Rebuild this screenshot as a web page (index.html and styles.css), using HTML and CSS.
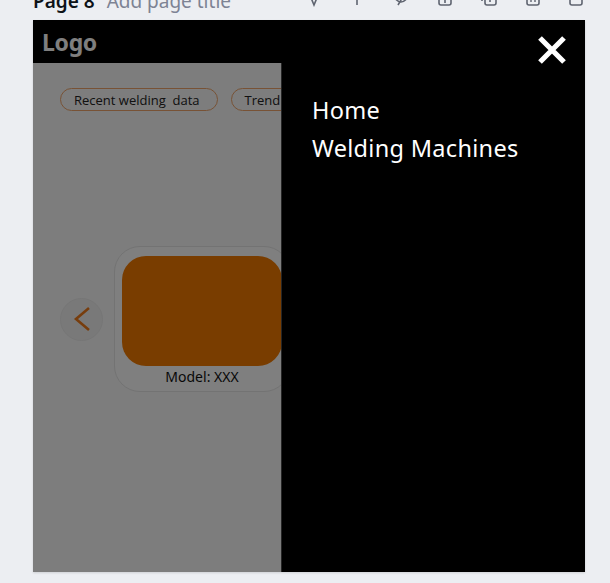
FILE: index.html
```html
<!DOCTYPE html>
<html lang="en">
<head>
<meta charset="utf-8">
<title>Page 8</title>
<link rel="stylesheet" href="styles.css">
</head>
<body>
  <div class="topbar">
    <div class="title"><b>Page 8</b><span class="muted">Add page title</span></div>
    <div class="tools">
      <svg class="tool" width="16" height="16" viewBox="0 0 16 16"><path d="M3 2 L8 14 L13 2" fill="none" stroke="#5f6470" stroke-width="1.6"/></svg>
      <svg class="tool" width="16" height="16" viewBox="0 0 16 16"><path d="M8 2 V14" fill="none" stroke="#5f6470" stroke-width="1.6"/></svg>
      <svg class="tool" width="18" height="16" viewBox="0 0 18 16"><path d="M2 6 Q9 16 16 6 M6 14 L12 4" fill="none" stroke="#5f6470" stroke-width="1.6"/></svg>
      <svg class="tool" width="16" height="16" viewBox="0 0 16 16"><rect x="2" y="1" width="12" height="13" rx="2" fill="none" stroke="#5f6470" stroke-width="1.6"/><path d="M8 5 V12" stroke="#5f6470" stroke-width="1.6"/></svg>
      <svg class="tool" width="18" height="16" viewBox="0 0 18 16"><rect x="5" y="1" width="11" height="13" rx="2" fill="none" stroke="#5f6470" stroke-width="1.6"/><path d="M2 4 V10 M10 5 V11 M7 8 H13" stroke="#5f6470" stroke-width="1.6"/></svg>
      <svg class="tool" width="16" height="16" viewBox="0 0 16 16"><rect x="2" y="1" width="12" height="13" rx="2" fill="none" stroke="#5f6470" stroke-width="1.6"/><path d="M6 6 V11 M10 6 V11" stroke="#5f6470" stroke-width="1.4"/></svg>
      <svg class="tool" width="16" height="16" viewBox="0 0 16 16"><path d="M2 4 V12 Q2 14 4 14 H12 Q14 14 14 12 V8" fill="none" stroke="#5f6470" stroke-width="1.6"/></svg>
    </div>
  </div>

  <div class="frame">
    <header class="site-header">
      <span class="logo">Logo</span>
    </header>

    <main class="content">
      <div class="chips">
        <span class="chip">Recent welding&nbsp; data</span>
        <span class="chip">Trend analysis</span>
      </div>

      <div class="carousel">
        <button class="nav-btn" aria-label="Previous">
          <svg width="22" height="28" viewBox="0 0 22 28"><path d="M18 3 L5 14 L18 25" fill="none" stroke="#ef7a1a" stroke-width="2.6"/></svg>
        </button>
        <div class="card">
          <div class="card-img"></div>
          <div class="card-label">Model: XXX</div>
        </div>
      </div>
    </main>

    <div class="overlay"></div>

    <nav class="drawer">
      <a class="menu-item" href="#">Home</a>
      <a class="menu-item" href="#">Welding Machines</a>
    </nav>

    <button class="close" aria-label="Close">
      <svg width="30" height="30" viewBox="0 0 30 30"><path d="M3 3 L27 27 M27 3 L3 27" stroke="#ffffff" stroke-width="5.2"/></svg>
    </button>
  </div>
</body>
</html>
```

FILE: styles.css
```css
* { box-sizing: border-box; }

html, body {
  margin: 0;
  padding: 0;
}

body {
  width: 610px;
  height: 583px;
  overflow: hidden;
  background: #eceef2;
  font-family: "Noto Sans", "Open Sans", sans-serif;
}

.topbar {
  height: 20px;
  display: flex;
  align-items: flex-start;
  padding-left: 33px;
}

.title {
  margin-top: -8px;
  font-size: 19px;
  line-height: 19px;
  color: #0e1318;
  white-space: nowrap;
  font-family: "Noto Sans", sans-serif;
}

.title b { font-weight: 600; }
.muted { color: #7d8394; margin-left: 12px; }

.tools {
  display: flex;
  align-items: flex-start;
  gap: 27px;
  margin-left: 75px;
  margin-top: -9px;
}

.tool { display: block; }

.frame {
  position: relative;
  margin-left: 33px;
  width: 552px;
  height: 552px;
  background: #fafafa;
  overflow: hidden;
  box-shadow: 0 1px 2px rgba(0,0,0,0.12);
}

.site-header {
  height: 43px;
  background: #000;
  display: flex;
  align-items: center;
  padding-left: 9px;
}

.logo {
  color: #ffffff;
  font-family: "Noto Sans", sans-serif;
  font-weight: 700;
  font-size: 23px;
  letter-spacing: -0.3px;
}

.content {
  width: 248px;
  height: 509px;
  overflow: hidden;
  padding: 25px 0 0 27px;
}

.chips {
  display: flex;
  gap: 13px;
  white-space: nowrap;
}

.chip {
  display: inline-flex;
  align-items: center;
  flex-shrink: 0;
  height: 23px;
  padding: 0 17px 0 13px;
  border: 1px solid #f0a56a;
  border-radius: 12px;
  font-family: "Open Sans", sans-serif;
  font-size: 13px;
  color: #222;
  letter-spacing: 0;
}

.carousel {
  display: flex;
  align-items: center;
  gap: 11px;
  margin-top: 135px;
}

.nav-btn {
  width: 43px;
  height: 43px;
  flex-shrink: 0;
  border-radius: 50%;
  border: 1px solid #ececec;
  background: #f3f3f3;
  display: flex;
  align-items: center;
  justify-content: center;
  padding: 0;
}

.card {
  width: 176px;
  height: 146px;
  border: 1px solid #e6e6e6;
  border-radius: 26px;
  background: #ffffff;
  padding: 9px 7px 0 7px;
  flex-shrink: 0;
}

.card-img {
  height: 110px;
  border-radius: 24px;
  background: #f27a00;
}

.card-label {
  text-align: center;
  font-family: "Noto Sans", sans-serif;
  font-size: 14px;
  line-height: 20px;
  color: #111;
  margin-top: 1px;
}

.overlay {
  position: absolute;
  inset: 0;
  background: rgba(0, 0, 0, 0.5);
  z-index: 1;
}

.drawer {
  position: absolute;
  top: 43px;
  right: 0;
  bottom: 0;
  width: 304px;
  background: #000;
  border-left: 1px solid #262626;
  z-index: 2;
  padding: 31px 0 0 30px;
  display: flex;
  flex-direction: column;
  gap: 6px;
}

.menu-item {
  display: block;
  color: #ffffff;
  text-decoration: none;
  font-family: "Noto Sans", sans-serif;
  font-size: 23.5px;
  line-height: 32px;
  letter-spacing: 0.3px;
}

.close {
  position: absolute;
  top: 14px;
  right: 17px;
  z-index: 3;
  width: 32px;
  height: 32px;
  padding: 1px;
  border: 0;
  background: transparent;
  display: flex;
  align-items: center;
  justify-content: center;
}
```
